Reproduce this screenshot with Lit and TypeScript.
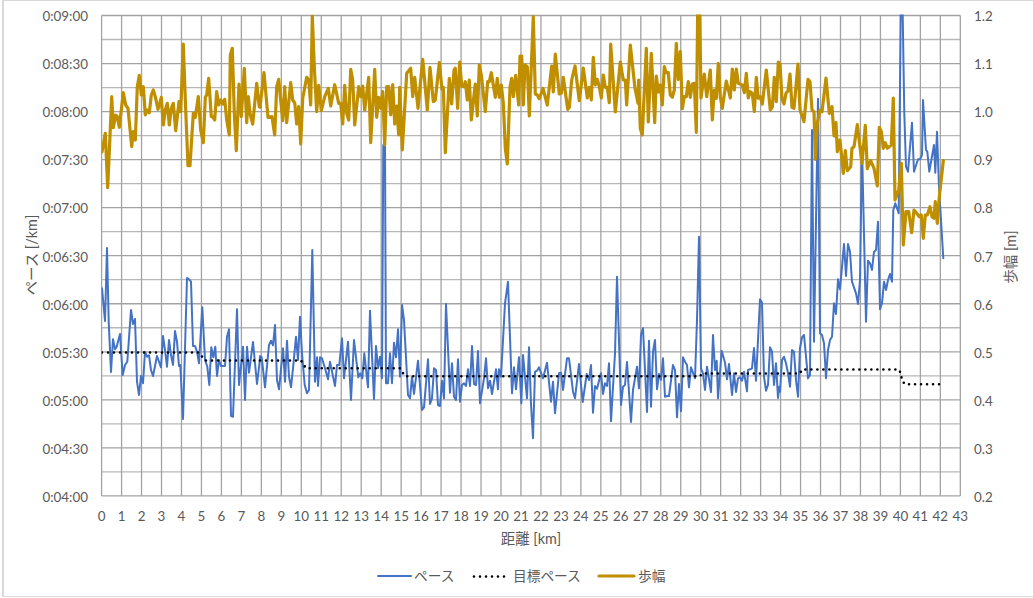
import { LitElement, html, svg, css } from "lit";
import { customElement } from "lit/decorators.js";

type Seg = { ox: number; oy: number; p: number[] };

const conv = (segs: Seg[]) =>
  segs
    .map((s) => {
      const out: string[] = [];
      for (let i = 0; i < s.p.length; i += 2) {
        out.push(`${(s.ox + s.p[i] / 3).toFixed(1)},${(s.oy + s.p[i + 1] / 3).toFixed(1)}`);
      }
      return out.join(" ");
    })
    .join(" ");

const GOLD: Seg[] = [
  { ox: 0, oy: 0, p: [306,455,316,400,323,563,335,290,340,383,347,345,352,350,358,382,370,278,377,315,384,325,395,440,400,395,406,420,412,260,418,226,424,285,430,260,436,345,442,330,448,338,454,285,460,270,466,290,474,328,484,292,490,375,496,330,502,310,508,375,514,325,520,310,527,392,537,305,542,335,550,132,556,300,564,497,570,497,580,340,586,352,595,290,602,390,610,428,616,292,620,285,626,235,634,350,638,350,644,360,650,275,656,315,662,300,668,312,674,298,680,360,688,405,691,165,697,145,703,340,709,452,717,252,724,350,733,205,740,368,745,290,750,340,758,372,770,250,778,320] },
  { ox: 260, oy: 0, p: [0,322,12,218,24,352,36,350,44,405,50,260,56,238,68,362,74,260,80,368,92,248,98,300,104,308,110,372,116,320,122,432,128,295,140,232,146,240,152,315,157,48,163,200,170,335,176,256,184,332,194,290,205,265,212,318,224,254,236,310,242,310,248,372,254,256,260,340,266,360,272,208,278,240,284,375,296,260,302,290,308,258,314,330,326,232,332,428,344,208,350,352,356,292,362,325,368,275,374,435,380,260,386,260,392,345,398,254,404,372,410,318,416,405,419,262,427,450,440,220,452,205,458,290,464,232,474,325,488,178,502,330,510,202,520,305,526,300,538,188,546,268,550,262,556,458,568,235,575,312,582,210,586,205,593,325,599,186,605,258,612,260,616,245,622,300,628,240,634,360,646,252,652,348,658,195,664,225,676,335,683,245,688,245,694,218,706,292,712,235,718,292,724,255,730,310,736,445,742,492,750,262,755,235,760,290,767,226,776,315] },
  { ox: 520, oy: 0, p: [0,168,5,168,10,315,15,195,22,200,28,348,40,50,46,282,52,285,58,296,69,265,82,315,95,198,100,276,106,162,118,282,124,280,130,232,143,328,148,322,155,240,165,198,178,302,190,204,202,294,208,262,214,300,220,172,226,255,232,238,238,260,244,294,250,225,256,262,262,262,268,308,272,132,286,336,301,186,310,240,316,240,320,315,331,135,345,265,354,310,356,240,361,385,367,405,379,145,385,366,394,160,404,368,409,228,415,276,421,255,427,315,433,200,439,218,445,218,451,285,457,292,463,270,469,130,475,238,481,155,487,326,493,290,499,290,505,245,511,292,517,252,523,250,529,397,533,30,539,30,543,294,553,222,560,290,571,210,577,360,583,270,589,295,595,190,601,290,607,325,619,243,631,294,637,207,643,270,649,207,655,250,667,255,673,278,679,220,685,294,691,275,697,280,703,335,709,232,715,295,721,290,727,312,739,210,751,330,757,322,763,232,769,305,775,186] },
  { ox: 780, oy: 0, p: [0,192,6,296,12,312,18,280,24,272,30,222,36,322,42,325,54,192,60,330,72,365,84,238,90,245,96,330,102,335,106,478,112,370,120,330,126,335,138,234,148,340,156,320,162,408,168,368,172,455,180,420,190,520,196,452,202,512,212,500,216,445,222,440,232,374,246,490,256,376,262,506,272,482,282,505,292,558,298,382,304,395,310,445,316,428,322,445,334,435,340,294,345,600,356,570,364,490,370,735,378,635,386,635,395,698,402,630,412,642,418,650,424,645,430,715,436,645,442,645,450,620,456,650,462,655,466,605,472,670,478,590,490,482] },
];

const BLUE: Seg[] = [
  { ox: 0, oy: 250, p: [306,115,315,213,321,-6,326,215,333,366,339,268,345,298,350,290,360,252,368,375,375,345,382,335,393,180,399,222,405,207,411,395,417,435,423,378,429,400,435,305,441,320,447,316,453,360,459,378,471,318,483,352,489,258,495,300,501,350,507,270,513,315,519,345,525,243,531,275,537,348,541,345,549,507,561,84,567,88,573,95,579,288,585,288,591,305,597,340,607,172,615,330,622,350,628,405,634,292,640,322,646,290,651,378,657,330,663,348,675,348,681,260,687,238,693,498,699,500,711,178,717,405,729,290,735,450,741,290,747,368,759,276,771,402,778,345] },
  { ox: 260, oy: 270, p: [0,258,5,262,15,352,27,225,33,212,39,226,45,165,51,330,57,358,69,235,75,335,81,212,87,320,93,352,99,295,108,200,114,270,120,140,126,250,134,345,141,370,147,360,157,-60,165,335,171,262,174,348,180,262,186,265,192,285,198,305,204,328,210,275,225,348,231,285,238,285,246,205,252,325,264,215,273,390,282,210,295,322,301,310,307,325,313,250,324,352,330,122,342,388,348,228,354,295,360,260,366,325,370,-375,375,-375,378,340,384,340,390,250,396,340,402,218,408,262,414,178,420,320,426,105,432,150,444,375,450,385,456,320,462,372,474,272,486,420,492,412,504,268,510,402,516,385,522,295,528,300,534,405,540,408,546,332,552,385,558,102,570,368,576,280,582,380,588,390,594,268,600,395,606,345,612,340,618,348,624,298,630,348,636,228,642,342,648,345,654,243,660,400,672,325,678,265,684,355,690,332,696,372,708,298,714,358,717,298,723,320,735,100,744,35,756,370,762,292,768,358,777,262] },
  { ox: 520, oy: 270, p: [4,400,9,255,21,385,27,232,33,402,39,505,45,305,51,302,57,292,69,325,81,278,93,395,99,335,105,430,117,310,123,308,129,360,141,265,147,265,159,365,165,385,177,282,188,396,200,312,207,330,213,285,219,428,225,348,231,356,243,310,249,372,255,340,261,348,267,280,273,454,285,250,291,20,303,405,309,350,315,345,321,276,333,456,339,360,351,290,357,355,363,195,369,175,381,426,387,212,393,410,399,245,405,210,411,358,417,312,423,330,429,265,435,380,441,378,447,378,459,285,465,300,471,442,477,342,483,424,489,262,495,275,501,285,507,352,513,292,525,325,531,150,537,-100,543,296,549,310,555,360,561,290,573,366,579,195,585,300,590,272,594,385,605,242,615,278,621,328,627,282,636,375,642,310,648,366,654,325,660,322,666,332,672,305,681,364,684,300,690,298,696,295,702,234,708,332,720,88,726,98,732,320,738,362,744,345,750,232,756,245,762,345,768,280,774,384,778,350] },
  { ox: 780, oy: 200, p: [0,575,6,480,12,470,18,490,24,520,30,560,36,450,42,455,48,540,54,590,60,445,66,412,72,405,84,535,90,525,96,-210,102,425,114,-304,120,400,126,405,132,430,138,535,144,450,150,420,156,410,162,310,168,342,174,238,180,268,192,132,198,228,204,132,210,155,216,245,228,280,234,312,240,240,246,-160,258,365,264,182,270,190,276,210,282,155,288,150,294,65,300,328,306,310,312,245,318,270,324,240,330,222,336,245,340,30,346,10,356,40,362,-555,368,-555,373,-260,378,-100,384,-85,396,-232,402,-85,414,-122,420,-122,426,-135,429,-300,438,-150,442,-145,448,-85,462,-165,466,-82,471,-205,477,-40,490,175] },
];

const DOTS = "102,352.5 199,352.5 205,360.5 301,360.5 306,368.3 400,368.3 405,376.3 700,376.3 702,373.5 800,373.5 802,369.5 899,369.5 901,374 902,380.5 905,384.3 941,384.3";

const X0 = 101.6;
const XSTEP = 19.97;
const Y0 = 15.5;
const YSTEP = 24.02;
const xAt = (k: number) => X0 + k * XSTEP;
const yAt = (k: number) => Y0 + k * YSTEP;

const PACES = ["0:09:00","0:08:30","0:08:00","0:07:30","0:07:00","0:06:30","0:06:00","0:05:30","0:05:00","0:04:30","0:04:00"];
const STRIDES = ["1.2","1.1","1.0","0.9","0.8","0.7","0.6","0.5","0.4","0.3","0.2"];

@customElement("app-root")
export class AppRoot extends LitElement {
  static styles = css`
    :host {
      display: block;
      width: 1033px;
      height: 598px;
      background: #fff;
      overflow: hidden;
    }
    .frame {
      margin-left: 2px;
      height: 597px;
      box-sizing: border-box;
      border-left: 2px solid #d9d9d9;
      border-top: 1px solid #d9d9d9;
      border-bottom: 1px solid #d9d9d9;
      background: #fff;
    }
    .chart {
      display: block;
      width: 1033px;
      height: 598px;
      margin: -1px 0 0 -4px;
    }
    text {
      font-family: "Lato", "Noto Sans CJK JP", sans-serif;
      fill: #595959;
      dominant-baseline: central;
    }
    .tick { font-size: 13.4px; }
    .title { font-size: 14.4px; }
    .legend { font-size: 13.7px; }
    .major { stroke: #a3a3a3; stroke-width: 1.3; fill: none; }
    .minor { stroke: #b8b8b8; stroke-width: 1.3; fill: none; }
    .blue { stroke: #4472c4; stroke-width: 2; fill: none; stroke-linejoin: round; stroke-linecap: round; }
    .gold { stroke: #bf8f00; stroke-width: 3.2; fill: none; stroke-linejoin: round; stroke-linecap: round; }
    .dots { stroke: #000; stroke-width: 2.6; fill: none; stroke-linecap: round; stroke-dasharray: 0 6; }
  `;

  render() {
    const verticals = Array.from({ length: 44 }, (_, k) => k);
    const horizontals = Array.from({ length: 21 }, (_, k) => k);
    return html`<div class="frame">
      <svg class="chart" viewBox="0 0 1033 598" xmlns="http://www.w3.org/2000/svg">
        <defs>
          <clipPath id="plot"><rect x="${X0}" y="${Y0 - 1}" width="${43 * XSTEP}" height="${20 * YSTEP + 2}"></rect></clipPath>
        </defs>
        ${horizontals.map((k) => svg`<line class="${k % 2 ? "minor" : "major"}" x1="${X0}" x2="${xAt(43)}" y1="${yAt(k)}" y2="${yAt(k)}"></line>`)}
        ${verticals.map((k) => svg`<line class="major" x1="${xAt(k)}" x2="${xAt(k)}" y1="${Y0}" y2="${yAt(20)}"></line>`)}
        <g clip-path="url(#plot)">
          <polyline class="blue" points="${conv(BLUE)}"></polyline>
          <polyline class="dots" points="${DOTS}"></polyline>
          <polyline class="gold" points="${conv(GOLD)}"></polyline>
        </g>
        ${PACES.map((t, i) => svg`<text class="tick" x="88" y="${yAt(i * 2) + 0.8}" text-anchor="end">${t}</text>`)}
        ${STRIDES.map((t, i) => svg`<text class="tick" x="974" y="${yAt(i * 2) + 0.8}">${t}</text>`)}
        ${verticals.map((k) => svg`<text class="tick" x="${xAt(k)}" y="516" text-anchor="middle">${k}</text>`)}
        <text class="title" x="531" y="538" text-anchor="middle">距離 [km]</text>
        <text class="title" transform="translate(31 255) rotate(-90)" text-anchor="middle">ペース [/km]</text>
        <text class="title" transform="translate(1010 257) rotate(-90)" text-anchor="middle">歩幅 [m]</text>
        <line class="blue" x1="378" x2="411" y1="576" y2="576"></line>
        <text class="legend" x="414" y="575">ペース</text>
        <line class="dots" x1="474" x2="507" y1="576.5" y2="576.5"></line>
        <text class="legend" x="513" y="575">目標ペース</text>
        <line class="gold" x1="599" x2="634" y1="576" y2="576"></line>
        <text class="legend" x="638" y="575">歩幅</text>
      </svg>
    </div>`;
  }
}
